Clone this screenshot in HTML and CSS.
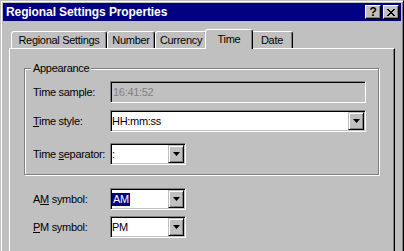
FILE: index.html
```html
<!DOCTYPE html>
<html lang="en">
<head>
  <meta charset="UTF-8">
  <title>Regional Settings Properties</title>
  <link rel="stylesheet" href="styles.css">
</head>
<body>
  <div class="window">
    <div class="titlebar">
      <span class="title">Regional Settings Properties</span>
      <div class="title-buttons">
        <span class="cap-btn">?</span>
        <span class="cap-btn">
          <svg width="8" height="7" viewBox="0 0 8 7" shape-rendering="crispEdges"><path d="M0 0h2l2 2.5L6 0h2L5 3.5 8 7H6L4 4.5 2 7H0l3-3.5z"/></svg>
        </span>
      </div>
    </div>

    <div class="dialog">
      <div class="tabs">
        <div class="tab tab-regional">Regional Settings</div>
        <div class="tab tab-number">Number</div>
        <div class="tab tab-currency">Currency</div>
        <div class="tab tab-time tab-active">Time</div>
        <div class="tab tab-date">Date</div>
      </div>

      <div class="page">
        <div class="group">
          <span class="group-label">Appearance</span>
          <div class="row">
            <span class="label">Time sample:</span>
            <div class="edit edit-wide disabled">16:41:52</div>
          </div>
          <div class="row row-style">
            <span class="label"><u>T</u>ime style:</span>
            <div class="combo combo-wide">
              <span>HH:mm:ss</span>
              <span class="drop"><svg width="7" height="4" viewBox="0 0 7 4"><path d="M0 0h7L3.5 4z"/></svg></span>
            </div>
          </div>
          <div class="row row-sep">
            <span class="label">Time <u>s</u>eparator:</span>
            <div class="combo combo-narrow">
              <span>:</span>
              <span class="drop"><svg width="7" height="4" viewBox="0 0 7 4"><path d="M0 0h7L3.5 4z"/></svg></span>
            </div>
          </div>
        </div>

        <div class="row row-am">
          <span class="label">A<u>M</u> symbol:</span>
          <div class="combo combo-narrow">
            <span class="selected">AM</span>
            <span class="drop"><svg width="7" height="4" viewBox="0 0 7 4"><path d="M0 0h7L3.5 4z"/></svg></span>
          </div>
        </div>
        <div class="row row-pm">
          <span class="label"><u>P</u>M symbol:</span>
          <div class="combo combo-narrow">
            <span>PM</span>
            <span class="drop"><svg width="7" height="4" viewBox="0 0 7 4"><path d="M0 0h7L3.5 4z"/></svg></span>
          </div>
        </div>
      </div>
    </div>
  </div>
</body>
</html>
```

FILE: styles.css
```css
html, body {
  margin: 0;
  overflow: hidden;
}
body {
  font-family: "Liberation Sans", Arial, sans-serif;
  font-size: 11px;
  letter-spacing: -0.3px;
  color: #000;
  background: #c0c0c0;
}
/* window is cut off at the bottom, so no bottom edge is drawn */
.window {
  box-sizing: border-box;
  width: 404px;
  height: 251px;
  padding: 2px 2px 0;
  border: 1px solid;
  border-bottom: 0;
  border-color: #c0c0c0 #000 #000 #c0c0c0;
  box-shadow: inset 1px 1px #fff, inset -1px 0 #808080;
  background: #c0c0c0;
  display: flex;
  flex-direction: column;
}
.titlebar {
  height: 18px;
  background: #000080;
  color: #fff;
  display: flex;
  align-items: center;
  justify-content: space-between;
  padding: 0 2px 0 3px;
}
.title {
  font-weight: bold;
  font-size: 12px;
  letter-spacing: -0.1px;
}
.title-buttons {
  display: flex;
  gap: 2px;
}
.cap-btn {
  box-sizing: border-box;
  width: 16px;
  height: 14px;
  background: #c0c0c0;
  border: 1px solid;
  border-color: #fff #000 #000 #fff;
  box-shadow: inset -1px -1px #808080;
  display: flex;
  align-items: center;
  justify-content: center;
  color: #000;
  font-weight: bold;
  font-size: 12px;
  line-height: 1;
}
.dialog {
  flex: 1;
  display: flex;
  flex-direction: column;
  padding: 0 6px;
}
.tabs {
  display: flex;
  align-items: flex-end;
  height: 19px;
  margin-top: 8px;
  padding-left: 2px;
}
.tab {
  box-sizing: border-box;
  height: 17px;
  border: 1px solid;
  border-bottom: 0;
  border-color: #fff #000 transparent #fff;
  border-radius: 3px 3px 0 0;
  box-shadow: inset -1px 0 #808080;
  display: flex;
  align-items: center;
  justify-content: center;
  background: #c0c0c0;
}
.tab-regional { width: 96px; }
.tab-number { width: 48px; }
.tab-currency { width: 52px; }
.tab-time { width: 48px; }
.tab-date { width: 42px; }
.tab-active {
  height: 20px;
  margin: 0 -2px -1px;
  padding-bottom: 2px;
  position: relative;
  z-index: 1;
}
.page {
  flex: 1;
  border: 1px solid;
  border-bottom: 0;
  border-color: #fff #000 #000 #fff;
  box-shadow: inset -1px 0 #808080;
}
.group {
  position: relative;
  margin: 19px 15px 0 14px;
  padding: 12px 8px 9px;
  border: 1px solid #808080;
  box-shadow: inset 1px 1px #fff, 1px 1px #fff;
}
.group-label {
  position: absolute;
  top: -7px;
  left: 6px;
  padding: 0 2px;
  background: #c0c0c0;
  line-height: 13px;
}
.row {
  display: flex;
  align-items: center;
  height: 22px;
}
.row-style { margin-top: 7px; }
.row-sep { margin-top: 11px; }
.row-am { margin-top: 13px; padding-left: 23px; }
.row-pm { margin-top: 6px; padding-left: 23px; }
.label {
  width: 77px;
  flex-shrink: 0;
}
.edit,
.combo {
  box-sizing: border-box;
  height: 22px;
  border: 1px solid;
  border-color: #808080 #fff #fff #808080;
  box-shadow: inset 1px 1px #000, inset -1px -1px #c0c0c0;
  background: #fff;
  display: flex;
  align-items: center;
  padding: 1px;
}
.edit { padding-left: 2px; }
.edit-wide,
.combo-wide { width: 256px; }
.combo-narrow { width: 76px; }
.disabled {
  background: #c0c0c0;
  color: #808080;
}
.drop {
  box-sizing: border-box;
  width: 16px;
  align-self: stretch;
  margin-left: auto;
  border: 1px solid;
  border-color: #c0c0c0 #000 #000 #c0c0c0;
  box-shadow: inset 1px 1px #fff, inset -1px -1px #808080;
  background: #c0c0c0;
  display: flex;
  align-items: center;
  justify-content: center;
}
.drop svg {
  display: block;
}
.selected {
  background: #000080;
  color: #fff;
  line-height: 13px;
  padding: 0 1px;
}
```
